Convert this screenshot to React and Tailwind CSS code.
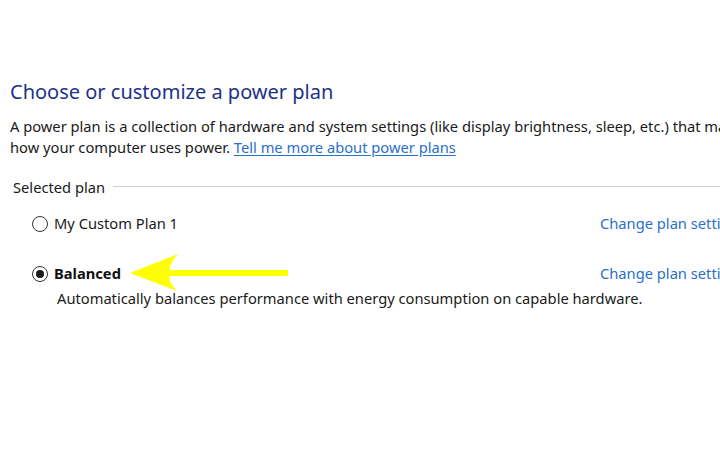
export default function App() {
  return (
    <div className="w-[720px] h-[450px] bg-white overflow-hidden relative" style={{ fontFamily: '"Noto Sans", "Open Sans", sans-serif' }}>
      <div className="pt-[78px] pl-[10px] whitespace-nowrap">
        <div className="text-[20px] leading-[28px] text-[#1e3287]">Choose or customize a power plan</div>
        <div className="mt-[10px] text-[14.7px] leading-[21px] text-[#1a1a1a]">
          <div>A power plan is a collection of hardware and system settings (like display brightness, sleep, etc.) that manage</div>
          <div>
            how your computer uses power.{" "}
            <span className="text-[#2a6fc9] underline underline-offset-2">Tell me more about power plans</span>
          </div>
        </div>
        <div className="mt-[19px] flex items-center pl-[3px]">
          <span className="text-[14.7px] leading-[21px] text-[#1a1a1a]">Selected plan</span>
          <div className="ml-[8px] flex-1 h-px bg-[#cfcfcf] -mt-[3px]" />
        </div>
        <div className="mt-[15px] flex items-center pl-[22px]">
          <span className="w-[16px] h-[16px] rounded-full border border-[#333] bg-white" />
          <span className="ml-[6px] text-[14.7px] leading-[21px] text-[#1a1a1a]">My Custom Plan 1</span>
          <span className="ml-auto w-[120px] text-[14.7px] leading-[21px] text-[#2a6fc9]">Change plan settings</span>
        </div>
        <div className="mt-[29px] flex items-center pl-[22px]">
          <span className="w-[16px] h-[16px] rounded-full border border-[#333] bg-white flex items-center justify-center">
            <span className="w-[8px] h-[8px] rounded-full bg-[#1a1a1a]" />
          </span>
          <span className="ml-[6px] text-[14.7px] leading-[21px] font-bold text-[#111]">Balanced</span>
          <span className="ml-auto w-[120px] text-[14.7px] leading-[21px] text-[#2a6fc9]">Change plan settings</span>
        </div>
        <div className="mt-[4px] pl-[47px] text-[14.7px] leading-[21px] text-[#1a1a1a]">
          Automatically balances performance with energy consumption on capable hardware.
        </div>
      </div>
      <svg className="absolute left-0 top-0" width="720" height="450" viewBox="0 0 720 450">
        <path d="M130 273 L178 254 Q168 266 170 270 L288 270 L288 276 L170 276 Q168 282 177 291 Z" fill="#ffff00" />
      </svg>
    </div>
  );
}
